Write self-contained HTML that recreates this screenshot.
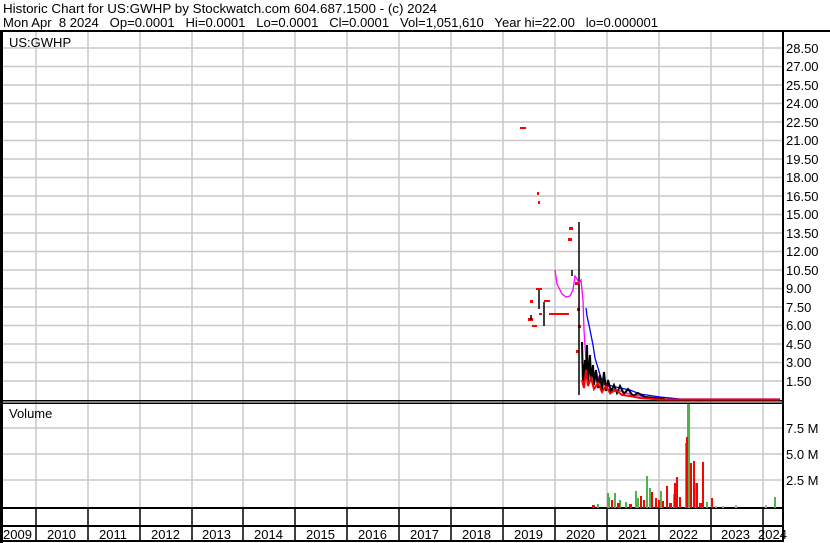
<!DOCTYPE html>
<html><head><meta charset="utf-8"><style>
html,body{margin:0;padding:0;background:#fff;width:830px;height:543px;overflow:hidden}
svg{display:block}
text{font-family:"Liberation Sans",Arial,sans-serif;font-size:13px;fill:#000;white-space:pre}
</style></head><body>
<svg width="830" height="543" viewBox="0 0 830 543" xmlns="http://www.w3.org/2000/svg" xml:space="preserve">
<rect width="830" height="543" fill="#fff"/>
<text x="3" y="13" textLength="434" lengthAdjust="spacingAndGlyphs">Historic Chart for US:GWHP by Stockwatch.com 604.687.1500 - (c) 2024</text>
<text x="3" y="27" textLength="655" lengthAdjust="spacingAndGlyphs">Mon Apr  8 2024   Op=0.0001   Hi=0.0001   Lo=0.0001   Cl=0.0001   Vol=1,051,610   Year hi=22.00   lo=0.000001</text>
<g stroke="#c8c8c8" stroke-width="1.5" fill="none">
<path d="M36 32V508M88 32V508M140 32V508M192 32V508M243 32V508M295 32V508M347 32V508M399 32V508M451 32V508M503 32V508M555 32V508M607 32V508M659 32V508M711 32V508M763 32V508"/>
<path d="M2 48H782M2 66.5H782M2 85H782M2 103.5H782M2 122H782M2 140.5H782M2 159H782M2 177.5H782M2 196H782M2 214.5H782M2 233H782M2 251.5H782M2 270H782M2 288.5H782M2 307H782M2 325.5H782M2 344H782M2 362.5H782M2 381H782"/>
<path d="M2 428H782M2 454H782M2 480H782"/>
</g>
<g fill="#000">
<rect x="0" y="30" width="830" height="2"/>
<rect x="0" y="30" width="3" height="513"/>
<rect x="782" y="30" width="2" height="510"/>
<rect x="0" y="400" width="784" height="1.5"/>
<rect x="0" y="402.5" width="784" height="1.5"/>
<rect x="0" y="507" width="784" height="2"/>
<rect x="0" y="525" width="784" height="2"/>
<rect x="0" y="540" width="784" height="2"/>
</g>
<g stroke="#000" stroke-width="1.5"><path d="M36 509V540M88 509V540M140 509V540M192 509V540M243 509V540M295 509V540M347 509V540M399 509V540M451 509V540M503 509V540M555 509V540M607 509V540M659 509V540M711 509V540M763 509V540"/></g>
<text x="9" y="47">US:GWHP</text>
<text x="9" y="418">Volume</text>
<g style="font-size:14px">
<text x="786" y="53">28.50</text><text x="786" y="71">27.00</text><text x="786" y="90">25.50</text><text x="786" y="108">24.00</text><text x="786" y="127">22.50</text><text x="786" y="145">21.00</text><text x="786" y="164">19.50</text><text x="786" y="182">18.00</text><text x="786" y="201">16.50</text><text x="786" y="219">15.00</text><text x="786" y="238">13.50</text><text x="786" y="256">12.00</text><text x="786" y="275">10.50</text><text x="786" y="293">9.00</text><text x="786" y="312">7.50</text><text x="786" y="330">6.00</text><text x="786" y="349">4.50</text><text x="786" y="367">3.00</text><text x="786" y="386">1.50</text>
<text x="786" y="433">7.5 M</text><text x="786" y="459">5.0 M</text><text x="786" y="485">2.5 M</text>
</g>
<g style="font-size:14px">
<text x="3" y="539">2009</text><text x="47" y="539">2010</text><text x="99" y="539">2011</text><text x="151" y="539">2012</text><text x="202" y="539">2013</text><text x="254" y="539">2014</text><text x="306" y="539">2015</text><text x="358" y="539">2016</text><text x="410" y="539">2017</text><text x="462" y="539">2018</text><text x="514" y="539">2019</text><text x="566" y="539">2020</text><text x="618" y="539">2021</text><text x="669" y="539">2022</text><text x="721" y="539">2023</text><text x="758" y="539">2024</text>
</g>
<g fill="#f00">
<rect x="520" y="127" width="6" height="2"/><rect x="537" y="192" width="2" height="3"/><rect x="538" y="201" width="2" height="3"/>
<rect x="569" y="227" width="4" height="3"/><rect x="568" y="238" width="4" height="3"/>
<rect x="536" y="288" width="6" height="2"/><rect x="530" y="300" width="3" height="3"/><rect x="528" y="318" width="5" height="3"/><rect x="532" y="325" width="5" height="2"/>
<rect x="544" y="300" width="6" height="2"/><rect x="539" y="313" width="3" height="2"/><rect x="549" y="313" width="20" height="2"/>
<rect x="575" y="282" width="4" height="3"/><rect x="577" y="308" width="3" height="3"/><rect x="578" y="325" width="3" height="3"/><rect x="576" y="350" width="3" height="3"/>
</g>
<g stroke="#000" stroke-width="1.5" fill="none">
<path d="M539 290V309M544 302V326M531 315V320M572 270V276M579 222V395"/>
</g>
<path d="M555 270L557 284L562 294L566 297L570 296L573 290L575 276L577 279L579 283L581 280L583 300L584 330L586 360L589 368L592 375L596 372L600 382L606 385L612 389L620 391L630 394L645 397L660 399" stroke="#f0f" stroke-width="1.3" fill="none"/>
<path d="M586 308L587 316L589 325L591 335L593 345L595 358L598 368L601 378L604 381L606 384L612 386L620 388L630 390L640 394L660 397L680 399L780 399" stroke="#00f" stroke-width="1.3" fill="none"/>
<path d="M582 342L583 385L585 360L586 375L587 345L588 382L590 355L591 380L593 365L594 385L596 370L598 388L600 375L602 390L604 372L606 391L608 380L611 392L614 385L617 393L620 386L624 394L628 389L633 396L638 393L645 397L655 398L665 399" stroke="#000" stroke-width="2" fill="none"/>
<path d="M582 380L584 388L586 370L588 386L591 378L594 389L598 383L602 392L606 386L610 393L616 390L622 395L630 396L640 398L660 399.5L780 399.5" stroke="#f00" stroke-width="2" fill="none"/>
<g fill="#4db34d">
<rect x="607" y="493" width="2" height="15"/><rect x="608" y="497" width="2" height="11"/><rect x="614" y="493" width="2" height="15"/><rect x="625" y="502" width="2" height="6"/><rect x="635" y="491" width="2" height="17"/><rect x="637" y="498" width="2" height="10"/><rect x="646" y="476" width="2" height="32"/><rect x="649" y="488" width="2" height="20"/><rect x="660" y="491" width="2" height="17"/><rect x="673" y="494" width="2" height="14"/><rect x="687" y="404" width="3" height="104"/><rect x="685" y="443" width="2" height="65"/><rect x="694" y="483" width="2" height="25"/><rect x="706" y="502" width="2" height="6"/><rect x="597" y="504" width="2" height="4"/><rect x="774" y="497" width="2" height="11"/><rect x="619" y="500" width="2" height="8"/>
</g>
<g fill="#f00">
<rect x="686" y="437" width="2" height="71"/><rect x="690" y="463" width="2" height="45"/><rect x="693" y="461" width="2" height="47"/><rect x="696" y="483" width="2" height="25"/><rect x="702" y="462" width="2" height="46"/><rect x="676" y="477" width="2" height="31"/><rect x="674" y="483" width="2" height="25"/><rect x="666" y="486" width="2" height="22"/><rect x="651" y="492" width="2" height="16"/><rect x="711" y="498" width="2" height="10"/><rect x="640" y="496" width="2" height="12"/><rect x="643" y="500" width="2" height="8"/><rect x="655" y="498" width="2" height="10"/><rect x="658" y="500" width="2" height="8"/><rect x="662" y="501" width="2" height="7"/><rect x="669" y="503" width="3" height="5"/><rect x="679" y="497" width="2" height="11"/><rect x="611" y="500" width="2" height="8"/><rect x="617" y="503" width="3" height="5"/><rect x="629" y="504" width="3" height="4"/><rect x="699" y="503" width="3" height="5"/><rect x="592" y="505" width="3" height="3"/>
</g>
<g fill="#aaa"><rect x="715" y="506" width="2" height="2"/><rect x="722" y="506" width="2" height="2"/><rect x="735" y="505" width="2" height="3"/><rect x="765" y="505" width="2" height="3"/></g>
</svg>
</body></html>
